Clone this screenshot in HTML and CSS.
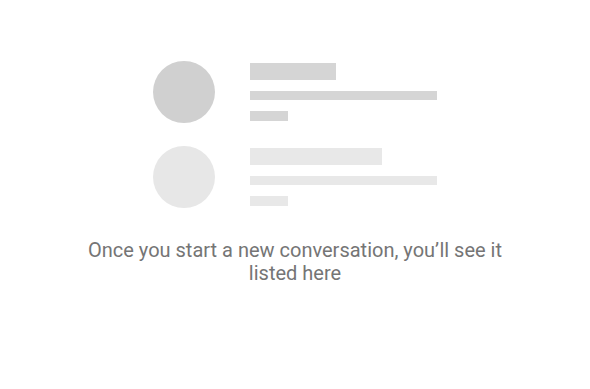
FILE: index.html
```html
<!DOCTYPE html>
<html lang="en">
<head>
<meta charset="utf-8">
<title>Conversations</title>
<link rel="stylesheet" href="styles.css">
</head>
<body>
<main class="empty">
  <div class="illustration">
    <div class="row row-dark">
      <div class="avatar"></div>
      <div class="lines">
        <div class="bar bar-title"></div>
        <div class="bar bar-long"></div>
        <div class="bar bar-short"></div>
      </div>
    </div>
    <div class="row row-light">
      <div class="avatar"></div>
      <div class="lines">
        <div class="bar bar-title wide"></div>
        <div class="bar bar-long"></div>
        <div class="bar bar-short"></div>
      </div>
    </div>
  </div>
  <p class="message">Once you start a new conversation, you’ll see it listed here</p>
</main>
</body>
</html>
```
FILE: styles.css
```css
html, body {
  margin: 0;
  padding: 0;
  background: #ffffff;
}

body {
  width: 590px;
  height: 389px;
  overflow: hidden;
  font-family: Roboto, "Liberation Sans", sans-serif;
}

.empty {
  display: flex;
  flex-direction: column;
  align-items: center;
  padding-top: 61px;
}

.illustration {
  display: flex;
  flex-direction: column;
  gap: 23px;
}

.row {
  display: flex;
  align-items: flex-start;
  gap: 35px;
}

.avatar {
  width: 62px;
  height: 62px;
  border-radius: 50%;
}

.lines {
  display: flex;
  flex-direction: column;
  gap: 11px;
  padding-top: 2px;
  width: 187px;
}

.bar-title {
  width: 86px;
  height: 17px;
}

.bar-title.wide {
  width: 132px;
}

.bar-long {
  width: 187px;
  height: 9px;
}

.bar-short {
  width: 38px;
  height: 10px;
}

.row-dark .avatar { background: #d0d0d0; }
.row-dark .bar { background: #d5d5d5; }
.row-light .avatar { background: #e7e7e7; }
.row-light .bar { background: #e8e8e8; }

.message {
  margin: 31px 0 0;
  width: 440px;
  text-align: center;
  font-size: 20px;
  line-height: 23px;
  color: #757575;
}
```
